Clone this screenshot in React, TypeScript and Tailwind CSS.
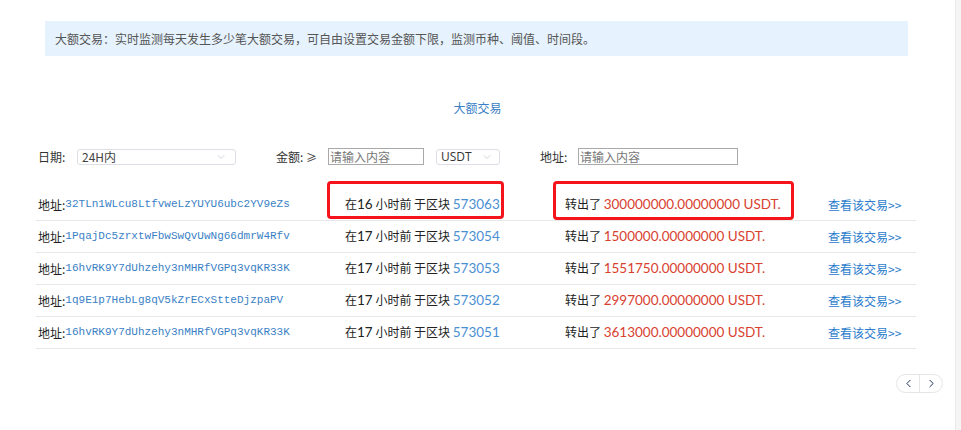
import React from "react";
import { ChevronDown, ChevronLeft, ChevronRight } from "lucide-react";

const rows = [
  { addr: "32TLn1WLcu8LtfvweLzYUYU6ubc2YV9eZs", h: "16", block: "573063", amt: "300000000.00000000" },
  { addr: "1PqajDc5zrxtwFbwSwQvUwNg66dmrW4Rfv", h: "17", block: "573054", amt: "1500000.00000000" },
  { addr: "16hvRK9Y7dUhzehy3nMHRfVGPq3vqKR33K", h: "17", block: "573053", amt: "1551750.00000000" },
  { addr: "1q9E1p7HebLg8qV5kZrECxStteDjzpaPV", h: "17", block: "573052", amt: "2997000.00000000" },
  { addr: "16hvRK9Y7dUhzehy3nMHRfVGPq3vqKR33K", h: "17", block: "573051", amt: "3613000.00000000" },
];

const cjk = "font-['Microsoft_YaHei','Noto_Sans_CJK_SC',sans-serif]";
const num = "font-['Lato','Noto_Sans_CJK_SC',sans-serif] text-[13.5px]";

export default function App() {
  return (
    <div className={`relative flex h-[430px] w-full bg-white ${cjk}`}>
      <div className="flex w-[955px] flex-col pt-[21px]">
        <div className="ml-[45px] flex h-[35px] w-[863px] items-center bg-[#e6f2fd] pl-[10px] text-[12px] text-[#555]">
          大额交易：实时监测每天发生多少笔大额交易，可自由设置交易金额下限，监测币种、阈值、时间段。
        </div>

        <div className="mt-[44px] h-[16px] text-center text-[12px] leading-[16px] text-[#3a7fc6]">大额交易</div>

        <div className="mt-[32px] flex h-[17px] items-center text-[12px] text-[#333]">
          <span className="ml-[38px] w-[39px]">日期:</span>
          <div className="flex h-[16px] w-[159px] items-center justify-between rounded-[3px] border border-[#dcdfe6] pl-[4px] pr-[8px] text-[#444]">
            <span>24H内</span>
            <ChevronDown size={12} color="#c0c4cc" strokeWidth={1.5} />
          </div>
          <span className="ml-[40px] w-[52px]">
            金额: <span className="text-[11px]">≥</span>
          </span>
          <div className="flex h-[17px] w-[96px] items-center border border-[#a9a9a9] pl-[1px] text-[#777]">请输入内容</div>
          <div className="ml-[12px] flex h-[16px] w-[64px] items-center justify-between rounded-[3px] border border-[#dcdfe6] pl-[4px] pr-[6px] text-[#333]">
            <span className="font-['Open_Sans',sans-serif]">USDT</span>
            <ChevronDown size={12} color="#c0c4cc" strokeWidth={1.5} />
          </div>
          <span className="ml-[40px] w-[38px]">地址:</span>
          <div className="flex h-[17px] w-[160px] items-center border border-[#a9a9a9] pl-[1px] text-[#777]">请输入内容</div>
        </div>

        <div className="ml-[36px] mt-[24px] w-[880px]">
          {rows.map((r, i) => (
            <div
              key={i}
              className="grid h-[32px] grid-cols-[307px_220px_263px_1fr] items-center border-b border-[#e8e8e8] pl-[2px] text-[12px] text-[#222]"
            >
              <div className="flex items-center">
                <span>地址:</span>
                <span className="font-['Liberation_Mono',monospace] text-[11px] text-[#3a7fc6]">{r.addr}</span>
              </div>
              <div>
                在<span className={num}>{r.h}</span> 小时前 于区块{" "}
                <span className={`${num} text-[#4a8fd4]`}>{r.block}</span>
              </div>
              <div>
                转出了 <span className={`${num} text-[#d8412e]`}>{r.amt} USDT.</span>
              </div>
              <div className="text-[12px] text-[#2b7ccc]">查看该交易&gt;&gt;</div>
            </div>
          ))}
        </div>

        <div className="mr-[12px] mt-[25px] flex justify-end">
          <div className="flex h-[19px] w-[47px] items-center rounded-full border border-[#e6e6e6]">
            <div className="flex h-full w-[23px] items-center justify-center border-r border-[#e6e6e6]">
              <ChevronLeft size={13} color="#1c2a55" strokeWidth={1.8} />
            </div>
            <div className="flex h-full flex-1 items-center justify-center">
              <ChevronRight size={13} color="#1c2a55" strokeWidth={1.8} />
            </div>
          </div>
        </div>
      </div>
      <div className="h-full w-[6px] border-l border-[#e9e9e9] bg-[#f5f5f5]" />

      <div className="pointer-events-none absolute left-[327px] top-[181px] h-[38px] w-[177px] rounded-[4px] border-[3px] border-[#f5141b]" />
      <div className="pointer-events-none absolute left-[553px] top-[181px] h-[39px] w-[241px] rounded-[4px] border-[3px] border-[#f5141b]" />
    </div>
  );
}
